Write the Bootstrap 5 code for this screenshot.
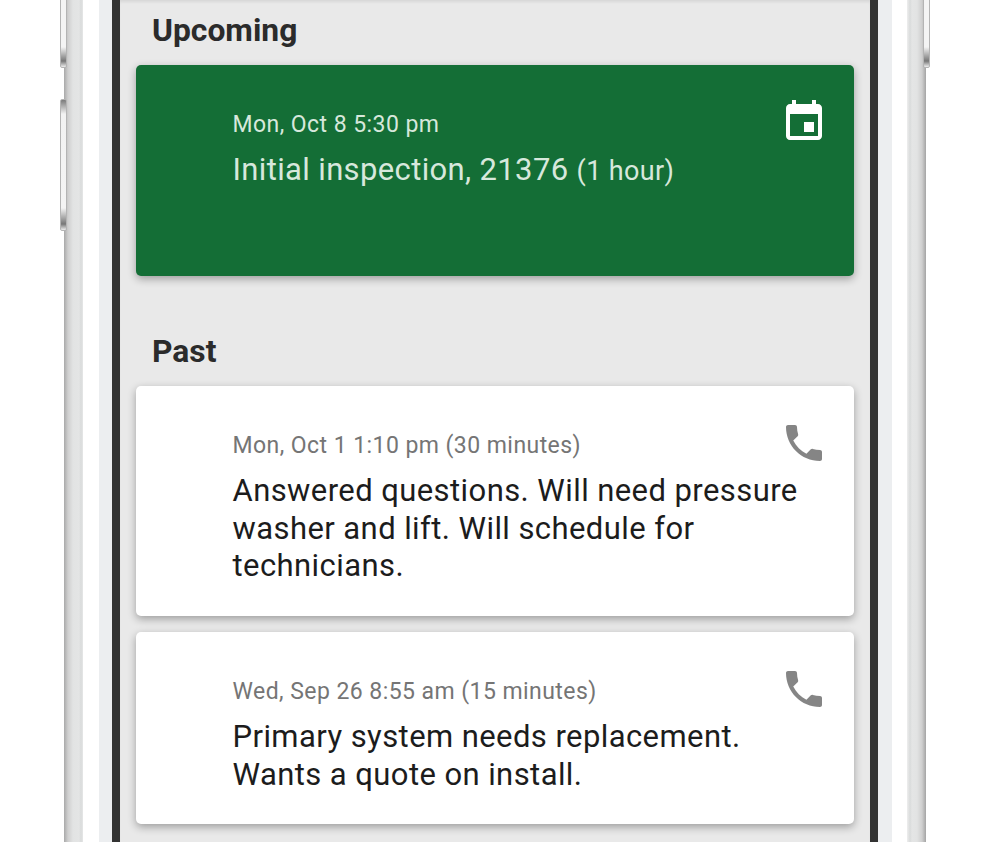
<!DOCTYPE html>
<html>
<head>
    <title>Activity</title>
    <link rel="stylesheet" href="https://cdn.jsdelivr.net/npm/bootstrap@5.3.0/dist/css/bootstrap.min.css">
    <style>
        /* Page */
        html, body {
            height: 842px;
            overflow: hidden;
            background-color: #fff;
            font-family: Roboto, "Liberation Sans", sans-serif;
        }

        /* Phone frame, outside in */
        .phone-wrap {
            position: relative;
            height: 842px;
            padding: 0 64px;
        }
        .phone-body {
            height: 100%;
            padding: 0 19px;
            background: linear-gradient(90deg, #a9a9a9 0, #cfcfcf 4px, #e2e3e3 9px, #e4e5e5 15px, #d9dbdb 17px, #e6e7e7 19px);
            position: relative;
        }
        .phone-body::after {
            content: "";
            position: absolute;
            top: 0;
            bottom: 0;
            right: 0;
            width: 19px;
            background: linear-gradient(270deg, #a4a4a4 0, #cfcfcf 4px, #e2e3e3 9px, #e4e5e5 14px, #d9dbdb 16px, #eeeeee 19px);
        }
        .phone-white {
            height: 100%;
            padding: 0 15px 0 16px;
            background-color: #fff;
        }
        .phone-bezel {
            height: 100%;
            padding: 0 14px 0 13px;
            background-color: #eceef0;
        }
        .phone-screen {
            height: 100%;
            padding: 0 16px;
            background-color: #e9e9e9;
            border-left: 8px solid #333;
            border-right: 8px solid #333;
            box-shadow: inset 0 3px 3px -1px rgba(0, 0, 0, .08);
        }

        /* Side buttons lie over the frame edge */
        .side-btn {
            position: absolute;
            width: 7px;
            border-radius: 2px;
            border: 1px solid #b4b4b4;
            background: linear-gradient(180deg, #7a7a7a 0, #f2f2f2 14px, #f4f4f4 calc(100% - 22px), #777 calc(100% - 6px), #eee 100%);
        }
        .btn-mute { left: 60px; top: -10px; height: 78px; background: linear-gradient(180deg, #f4f4f4 0, #f4f4f4 calc(100% - 20px), #777 calc(100% - 6px), #eee 100%); }
        .btn-volume { left: 60px; top: 99px; height: 132px; }
        .btn-power { left: 923px; top: -10px; height: 78px; background: linear-gradient(180deg, #f4f4f4 0, #f4f4f4 calc(100% - 20px), #777 calc(100% - 6px), #eee 100%); }

        /* Section headings */
        .section-title {
            margin: 0;
            padding-left: 16px;
            font-size: 31.8px;
            line-height: 35px;
            font-weight: 700;
            color: #2b2b2b;
        }
        .title-upcoming { padding-top: 13px; margin-bottom: 17px; }
        .title-past { padding-top: 58px; margin-bottom: 17px; }

        /* Activity cards */
        .activity-card {
            flex-direction: row;
            justify-content: space-between;
            padding-left: 96.5px;
            padding-right: 26px;
            border: 0;
            border-radius: 5px;
            box-shadow: 0 3px 9px rgba(0, 0, 0, .33);
            background-color: #fff;
        }
        .activity-card + .activity-card { margin-top: 16px; }
        .activity-green {
            height: 211px;
            padding-top: 46px;
            background-color: #146e36;
            color: #d7e8dc;
        }
        .activity-past { color: #1c1c1c; }
        .activity-tall { height: 230px; padding-top: 47px; }
        .activity-short { height: 192px; padding-top: 47px; }
        .activity-date {
            font-size: 23px;
            line-height: 26px;
            letter-spacing: .44px;
            color: #757575;
        }
        .activity-green .activity-date { margin-top: 1px; color: #d7e8dc; }
        .activity-text {
            margin: 0;
            font-size: 31px;
            line-height: 37.5px;
            letter-spacing: .42px;
        }
        .activity-past .activity-text { margin-top: 13px; }
        .activity-green .activity-text { margin-top: 13px; letter-spacing: .36px; }
        .activity-note { font-size: 27px; }
        .activity-icon {
            flex: none;
            width: 48px;
            height: 48px;
            fill: #858585;
            margin-top: -14px;
            margin-left: -30px;
        }
        .activity-green .activity-icon { fill: #fff; margin-top: -13px; }
    </style>
</head>
<body>
    <div class="phone-wrap">
        <div class="phone-body">
            <div class="phone-white">
                <div class="phone-bezel">
                    <div class="phone-screen">
                        <!-- Upcoming -->
                        <h2 class="section-title title-upcoming">Upcoming</h2>
                        <div class="card activity-card activity-green">
                            <div>
                                <div class="activity-date">Mon, Oct 8 5:30 pm</div>
                                <p class="activity-text">Initial inspection, 21376 <span class="activity-note">(1 hour)</span></p>
                            </div>
                            <svg class="activity-icon" viewBox="0 0 24 24"><path d="M17 12h-5v5h5v-5zM16 1v2H8V1H6v2H5c-1.11 0-1.99.9-1.99 2L3 19c0 1.1.89 2 2 2h14c1.1 0 2-.9 2-2V5c0-1.1-.9-2-2-2h-1V1h-2zm3 18H5V8h14v11z"/></svg>
                        </div>

                        <!-- Past -->
                        <h2 class="section-title title-past">Past</h2>
                        <div class="card activity-card activity-past activity-tall">
                            <div>
                                <div class="activity-date">Mon, Oct 1 1:10 pm (30 minutes)</div>
                                <p class="activity-text">Answered questions. Will need pressure washer and lift. Will schedule for technicians.</p>
                            </div>
                            <svg class="activity-icon" viewBox="0 0 24 24"><path d="M6.62 10.79c1.44 2.83 3.76 5.14 6.59 6.59l2.2-2.2c.27-.27.67-.36 1.02-.24 1.12.37 2.33.57 3.57.57.55 0 1 .45 1 1V20c0 .55-.45 1-1 1-9.39 0-17-7.61-17-17 0-.55.45-1 1-1h3.5c.55 0 1 .45 1 1 0 1.25.2 2.45.57 3.57.11.35.03.74-.25 1.02l-2.2 2.2z"/></svg>
                        </div>
                        <div class="card activity-card activity-past activity-short">
                            <div>
                                <div class="activity-date">Wed, Sep 26 8:55 am (15 minutes)</div>
                                <p class="activity-text">Primary system needs replacement. Wants a quote on install.</p>
                            </div>
                            <svg class="activity-icon" viewBox="0 0 24 24"><path d="M6.62 10.79c1.44 2.83 3.76 5.14 6.59 6.59l2.2-2.2c.27-.27.67-.36 1.02-.24 1.12.37 2.33.57 3.57.57.55 0 1 .45 1 1V20c0 .55-.45 1-1 1-9.39 0-17-7.61-17-17 0-.55.45-1 1-1h3.5c.55 0 1 .45 1 1 0 1.25.2 2.45.57 3.57.11.35.03.74-.25 1.02l-2.2 2.2z"/></svg>
                        </div>
                    </div>
                </div>
            </div>
        </div>
        <div class="side-btn btn-mute"></div>
        <div class="side-btn btn-volume"></div>
        <div class="side-btn btn-power"></div>
    </div>
    <script src="https://cdn.jsdelivr.net/npm/bootstrap@5.3.0/dist/js/bootstrap.bundle.min.js"></script>
</body>
</html>
